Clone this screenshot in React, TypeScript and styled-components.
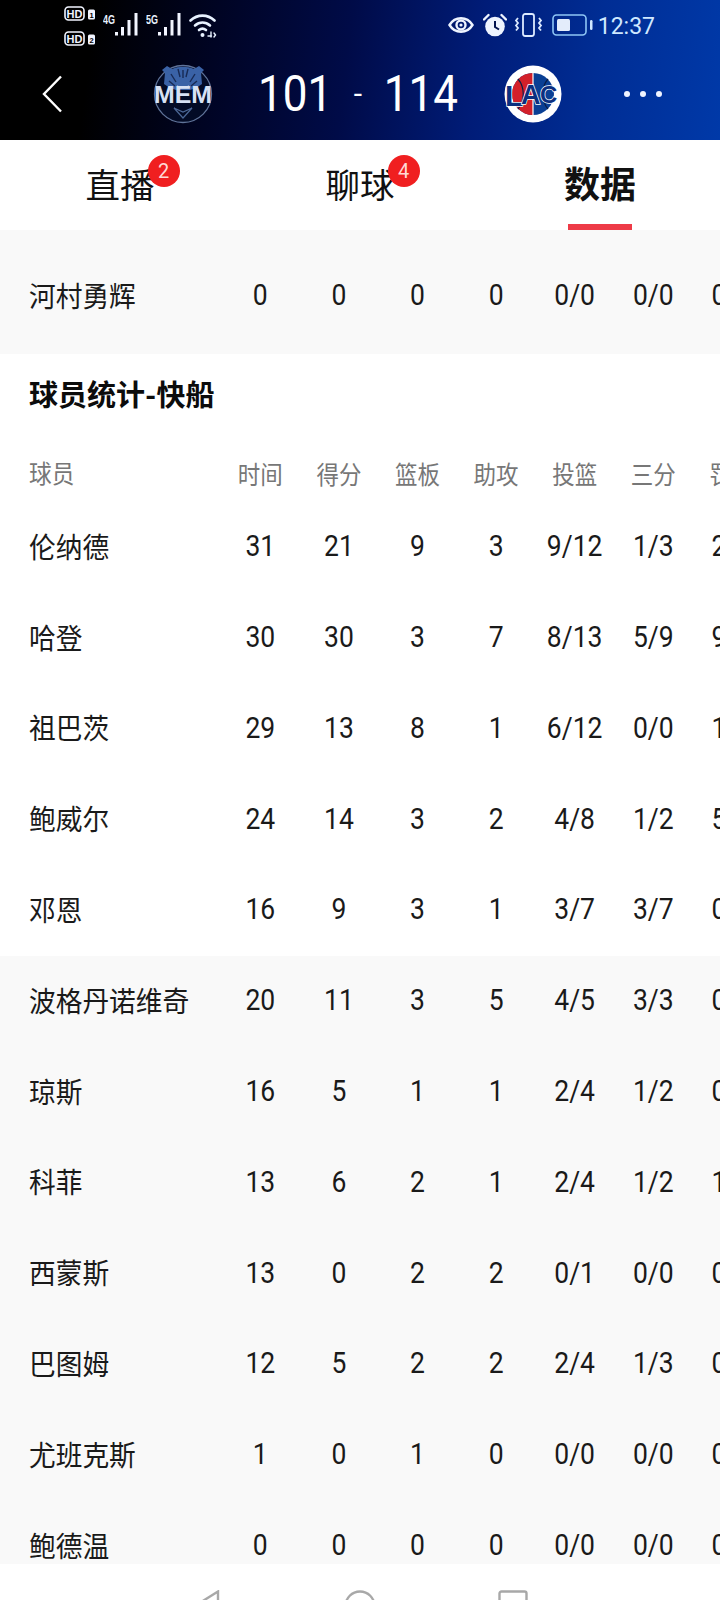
import React from 'react';
import styled, { createGlobalStyle } from 'styled-components';

const Global = createGlobalStyle`
  html, body { margin: 0; padding: 0; background: #fff; }
  * { box-sizing: border-box; }
`;

const Page = styled.div`
  width: 720px;
  height: 1600px;
  display: flex;
  flex-direction: column;
  overflow: hidden;
  font-family: Roboto, "Noto Sans CJK SC", sans-serif;
  background: #fff;
`;

const Hero = styled.header`
  height: 140px;
  flex: none;
  display: flex;
  flex-direction: column;
  color: #fff;
  background: linear-gradient(97deg, #000 0%, #000 13%, #000424 30%, #000b48 48%, #001c78 66%, #002d94 82%, #0039a8 100%);
`;

const StatusBar = styled.div`
  height: 50px;
  display: flex;
  align-items: center;
  padding-left: 64px;
  color: #e8f2ff;
`;

const HdStack = styled.div`
  width: 32px;
  display: flex;
  flex-direction: column;
  gap: 10px;
  margin-top: 2px;
`;

const StatusRight = styled.div`
  margin-left: auto;
  display: flex;
  align-items: center;
  padding-right: 65px;
  gap: 9px;
`;

const Clock = styled.span`
  font-size: 23px;
  line-height: 1;
  color: #cfe8ff;
  margin-left: -5px;
  transform: scaleY(1.08);
`;

const ScoreBar = styled.div`
  height: 90px;
  display: flex;
  align-items: center;
  padding-left: 42px;
  margin-top: -1px;
`;

const Score = styled.div`
  width: 200px;
  margin-left: 44px;
  display: flex;
  justify-content: space-between;
  align-items: center;
  font-size: 44px;
  font-weight: 400;
  line-height: 1;
  white-space: nowrap;
`;

const ScoreNum = styled.span`
  display: block;
  transform: scaleY(1.14);
`;

const ScoreDash = styled.span`
  font-size: 30px;
  font-weight: 400;
`;

const Dots = styled.div`
  display: flex;
  gap: 10px;
  margin-left: 60px;
`;

const Dot = styled.i`
  display: block;
  width: 6px;
  height: 6px;
  border-radius: 50%;
  background: #f0f4ff;
`;

const Tabs = styled.nav`
  height: 90px;
  flex: none;
  display: grid;
  grid-template-columns: repeat(3, 240px);
  background: #fff;
`;

const Tab = styled.div<{ $active?: boolean }>`
  position: relative;
  display: flex;
  align-items: center;
  justify-content: center;
  padding-top: 2px;
  font-size: ${p => (p.$active ? '36px' : '34.5px')};
  color: #111;
  font-weight: ${p => (p.$active ? 700 : 400)};
`;

const TabLabel = styled.span`
  position: relative;
  line-height: 1;
`;

const Badge = styled.span`
  position: absolute;
  left: 62px;
  top: -14px;
  width: 32px;
  height: 32px;
  border-radius: 50%;
  background: #f01f20;
  color: #ffd9d5;
  font-size: 20px;
  font-weight: 400;
  display: flex;
  align-items: center;
  justify-content: center;
`;

const Underline = styled.span`
  position: absolute;
  left: 88px;
  bottom: 0;
  width: 64px;
  height: 6px;
  background: #ee3b47;
`;

const Content = styled.main`
  flex: 1;
  min-height: 0;
  overflow: hidden;
`;

const TopGrey = styled.section`
  background: #f9f9f9;
  padding: 21.6px 0 11.6px;
`;

const WhiteBlock = styled.section`
  background: #fff;
`;

const GreyBlock = styled.section`
  background: #f9f9f9;
`;

const Title = styled.h2`
  margin: 0;
  height: 82.8px;
  padding: 0 0 4px 29px;
  display: flex;
  align-items: center;
  font-size: 29px;
  font-weight: 700;
  color: #0c0c0c;
`;

const Row = styled.div<{ $head?: boolean }>`
  display: grid;
  grid-template-columns: 221px repeat(7, 78.6px);
  align-items: center;
  width: 771px;
  height: ${p => (p.$head ? '65.6px' : '90.8px')};
  padding: ${p => (p.$head ? '6px 0 0' : '0 0 4px')};
  font-size: ${p => (p.$head ? '22.5px' : '26.5px')};
  color: ${p => (p.$head ? '#777' : '#1a1a1a')};
`;

const NameCell = styled.div`
  margin: 0 0 1px 29px;
  font-size: 1.008em;
  white-space: nowrap;
  transform: scaleY(1.08);
`;

const Cell = styled.div`
  text-align: center;
  white-space: nowrap;
  transform: scaleY(1.12);
`;

const BottomNav = styled.footer`
  height: 36px;
  flex: none;
  background: #fff;
  overflow: hidden;
  display: flex;
  padding: 26px 0 0 196px;
`;

const NavSvg = styled.svg`
  display: block;
  flex: none;
`;

const Hd = ({ n }: { n: string }) => (
  <svg width="32" height="15" viewBox="0 0 32 15">
    <rect x="1" y="1" width="19" height="13" rx="3.5" fill="none" stroke="#f2f5ff" strokeWidth="1.6" />
    <text x="10.5" y="11.5" textAnchor="middle" fontFamily="Liberation Sans" fontWeight="700" fontSize="11" fill="#f2f5ff">HD</text>
    <rect x="24" y="3.5" width="7" height="10" rx="1.5" fill="#f2f5ff" />
    <text x="27.5" y="11.5" textAnchor="middle" fontFamily="Liberation Sans" fontWeight="700" fontSize="7.5" fill="#000">{n}</text>
  </svg>
);

const Signal = ({ label, ml }: { label: string; ml: number }) => (
  <svg width="36" height="26" viewBox="0 0 36 26" style={{ marginLeft: ml }}>
    <text x="0" y="12" fontFamily="Liberation Sans" fontWeight="700" fontSize="12" textLength="12" lengthAdjust="spacingAndGlyphs" fill="#e8f2ff">{label}</text>
    <rect x="12" y="20" width="3" height="3.5" fill="#f2f5ff" />
    <rect x="18" y="15" width="3" height="8.5" fill="#f2f5ff" />
    <rect x="24.5" y="8" width="3" height="15.5" fill="#f2f5ff" />
    <rect x="31.5" y="1" width="3" height="22.5" fill="#f2f5ff" />
  </svg>
);

const Wifi = () => (
  <svg width="28" height="25" viewBox="0 0 28 25" style={{ marginLeft: 7 }} fill="none" stroke="#e8f2ff" strokeWidth="2.6" strokeLinecap="round">
    <path d="M1.5 7.5C8.5 1 18.5 1 25.5 7.5" />
    <path d="M6 12.5C10.5 8.5 16.5 8.5 21 12.5" />
    <path d="M10 17C12 15.4 15 15.4 17 17" />
    <circle cx="13.5" cy="22" r="2" fill="#e8f2ff" stroke="none" />
    <path d="M19 23h3.5M22 19v5M25 20l1.5 2-1.5 2" strokeWidth="1.4" />
  </svg>
);

const Eye = () => (
  <svg width="26" height="20" viewBox="0 0 26 20" fill="none" stroke="#eef4ff" strokeWidth="2.4">
    <path d="M1.5 10C7 1 19 1 24.5 10C19 19 7 19 1.5 10Z" />
    <circle cx="13" cy="10" r="4.5" />
    <circle cx="13" cy="10" r="1.6" fill="#eef4ff" stroke="none" />
  </svg>
);

const Alarm = () => (
  <svg width="24" height="24" viewBox="0 0 24 24" style={{ marginRight: -2 }}>
    <circle cx="12" cy="13.5" r="9.8" fill="#eef4ff" />
    <path d="M12 8v6l4 2.5" fill="none" stroke="#00124f" strokeWidth="2" />
    <path d="M1 6.5L5.5 2M23 6.5L18.5 2" stroke="#eef4ff" strokeWidth="2.4" strokeLinecap="round" />
  </svg>
);

const Vibrate = () => (
  <svg width="29" height="24" viewBox="0 0 29 24" fill="none" stroke="#dceaff" strokeWidth="1.8">
    <rect x="9" y="1" width="11" height="22" rx="2.2" />
    <path d="M4 5l-2 2.5 2 2.5-2 2.5 2 2.5-2 2.5M25 5l2 2.5-2 2.5 2 2.5-2 2.5 2 2.5" />
  </svg>
);

const Battery = () => (
  <svg width="42" height="22" viewBox="0 0 42 22">
    <rect x="1" y="1" width="33" height="20" rx="3.5" fill="none" stroke="#8ec6f5" strokeWidth="1.6" />
    <rect x="5" y="5" width="13" height="12" rx="1.5" fill="#e3ecfb" />
    <rect x="38" y="6" width="2.5" height="10" rx="1.2" fill="#cfe8ff" />
  </svg>
);

const Back = () => (
  <svg width="20" height="38" viewBox="0 0 20 38" fill="none" stroke="#fff" strokeWidth="2.4" style={{ flex: 'none' }}>
    <path d="M19 1.5L2 19L19 36.5" />
  </svg>
);

const MemLogo = () => (
  <svg width="62" height="62" viewBox="0 0 62 62" style={{ flex: 'none', marginLeft: 90 }}>
    <circle cx="31" cy="31" r="28.5" fill="#030b26" stroke="#5f7399" strokeWidth="1.3" />
    <path d="M12 21L13 10L10 7L15 3L20 6C27 3 35 3 42 6L47 3L52 7L49 10L50 21L44 25L38 27H24L18 25Z" fill="#3a62a6" />
    <path d="M19 11l5 8M43 11l-5 8M31 7v8M26 6l2 8M36 6l-2 8M17 18l6 5M45 18l-6 5" stroke="#182a54" strokeWidth="1.4" />
    <path d="M25 23l3 1M37 23l-3 1" stroke="#dfe8f7" strokeWidth="1.2" />
    <text x="31" y="40" textAnchor="middle" fontFamily="Liberation Sans" fontWeight="700" fontSize="23" textLength="58" lengthAdjust="spacingAndGlyphs" fill="#d7e1f4">MEM</text>
    <path d="M22 45L31 55L40 45L31 49Z" fill="none" stroke="#4c6897" strokeWidth="1.2" />
  </svg>
);

const LacLogo = () => (
  <svg width="62" height="62" viewBox="0 0 62 62" style={{ flex: 'none', marginLeft: 44 }}>
    <circle cx="31" cy="31" r="28.5" fill="#fff" />
    <circle cx="31" cy="31" r="21" fill="#0a3f94" />
    <path d="M31 10A21 21 0 0 0 31 52Z" fill="#d3202a" />
    <path d="M31 10V52" stroke="#fff" strokeWidth="1.2" />
    <path d="M16 16C23 24 23 38 16 46M46 16C39 24 39 38 46 46" fill="none" stroke="#0b1d46" strokeWidth="1.2" />
    <g fontFamily="Liberation Sans" fontWeight="700" fill="#0b2f7f" stroke="#fff" strokeWidth="1.4" paintOrder="stroke">
      <text x="3" y="43" fontSize="30">L</text>
      <text x="19" y="41" fontSize="27">A</text>
      <text x="38" y="40" fontSize="24">C</text>
    </g>
  </svg>
);

const heads = ['球员', '时间', '得分', '篮板', '助攻', '投篮', '三分', '罚球'];

type P = [string, string, string, string, string, string, string, string];

const starters: P[] = [
  ['伦纳德', '31', '21', '9', '3', '9/12', '1/3', '2/2'],
  ['哈登', '30', '30', '3', '7', '8/13', '5/9', '9/9'],
  ['祖巴茨', '29', '13', '8', '1', '6/12', '0/0', '1/2'],
  ['鲍威尔', '24', '14', '3', '2', '4/8', '1/2', '5/5'],
  ['邓恩', '16', '9', '3', '1', '3/7', '3/7', '0/0'],
];

const bench: P[] = [
  ['波格丹诺维奇', '20', '11', '3', '5', '4/5', '3/3', '0/0'],
  ['琼斯', '16', '5', '1', '1', '2/4', '1/2', '0/0'],
  ['科菲', '13', '6', '2', '1', '2/4', '1/2', '1/2'],
  ['西蒙斯', '13', '0', '2', '2', '0/1', '0/0', '0/0'],
  ['巴图姆', '12', '5', '2', '2', '2/4', '1/3', '0/0'],
  ['尤班克斯', '1', '0', '1', '0', '0/0', '0/0', '0/0'],
  ['鲍德温', '0', '0', '0', '0', '0/0', '0/0', '0/0'],
];

const StatRow = ({ data, head }: { data: string[]; head?: boolean }) => (
  <Row $head={head}>
    <NameCell>{data[0]}</NameCell>
    {data.slice(1).map((v, i) => (
      <Cell key={i}>{v}</Cell>
    ))}
  </Row>
);

export default function App() {
  return (
    <Page>
      <Global />
      <Hero>
        <StatusBar>
          <HdStack>
            <Hd n="1" />
            <Hd n="2" />
          </HdStack>
          <Signal label="4G" ml={7} />
          <Signal label="5G" ml={7} />
          <Wifi />
          <StatusRight>
            <Eye />
            <Alarm />
            <Vibrate />
            <Battery />
            <Clock>12:37</Clock>
          </StatusRight>
        </StatusBar>
        <ScoreBar>
          <Back />
          <MemLogo />
          <Score>
            <ScoreNum>101</ScoreNum>
            <ScoreDash>-</ScoreDash>
            <ScoreNum>114</ScoreNum>
          </Score>
          <LacLogo />
          <Dots>
            <Dot />
            <Dot />
            <Dot />
          </Dots>
        </ScoreBar>
      </Hero>
      <Tabs>
        <Tab>
          <TabLabel>
            直播
            <Badge>2</Badge>
          </TabLabel>
        </Tab>
        <Tab>
          <TabLabel>
            聊球
            <Badge>4</Badge>
          </TabLabel>
        </Tab>
        <Tab $active>
          <TabLabel>数据</TabLabel>
          <Underline />
        </Tab>
      </Tabs>
      <Content>
        <TopGrey>
          <StatRow data={['河村勇辉', '0', '0', '0', '0', '0/0', '0/0', '0/0']} />
        </TopGrey>
        <WhiteBlock>
          <Title>球员统计-快船</Title>
          <StatRow data={heads} head />
          {starters.map(p => (
            <StatRow key={p[0]} data={p} />
          ))}
        </WhiteBlock>
        <GreyBlock>
          {bench.map(p => (
            <StatRow key={p[0]} data={p} />
          ))}
        </GreyBlock>
      </Content>
      <BottomNav>
        <NavSvg width="24" height="24" viewBox="0 0 24 24" fill="none" stroke="#a8a8a8" strokeWidth="2.4">
          <path d="M22 1.5V30L2 14Z" />
        </NavSvg>
        <NavSvg width="32" height="32" viewBox="0 0 32 32" fill="none" stroke="#a8a8a8" strokeWidth="2.4" style={{ marginLeft: 124 }}>
          <circle cx="16" cy="16" r="14.5" />
        </NavSvg>
        <NavSvg width="30" height="30" viewBox="0 0 30 30" fill="none" stroke="#a8a8a8" strokeWidth="2.4" style={{ marginLeft: 122 }}>
          <rect x="1.5" y="1.5" width="27" height="27" rx="2" />
        </NavSvg>
      </BottomNav>
    </Page>
  );
}
